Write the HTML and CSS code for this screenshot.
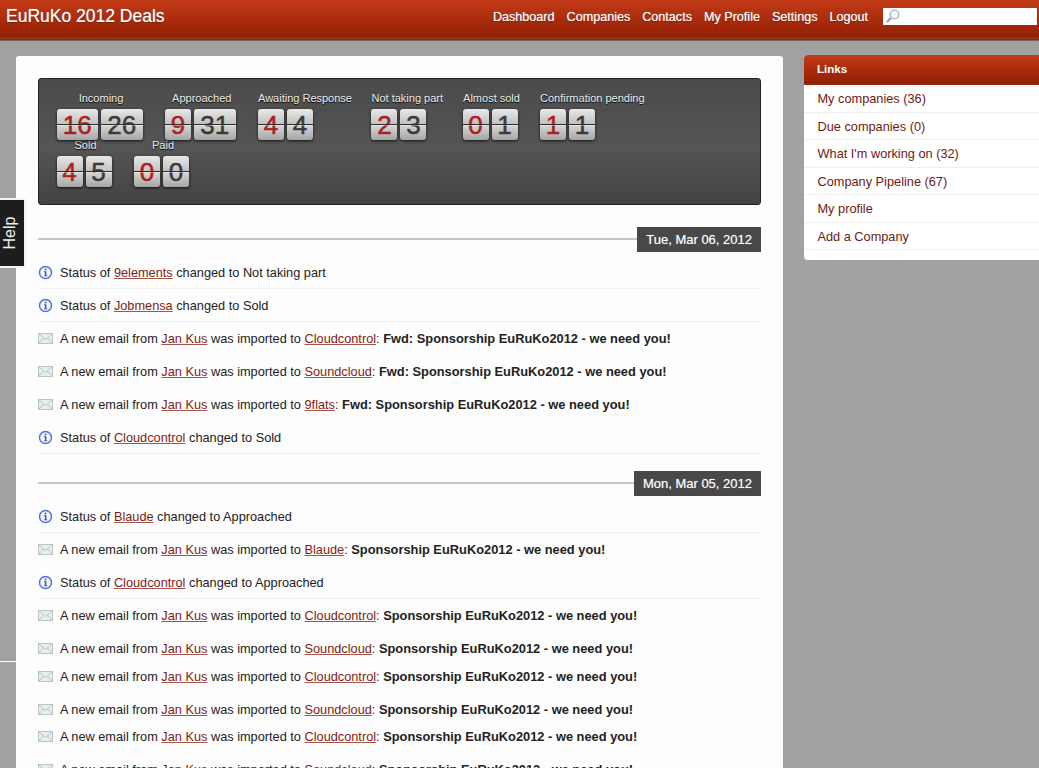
FILE: index.html
```html
<!DOCTYPE html>
<html lang="en">
<head>
	<meta charset="UTF-8">
	<title>EuRuKo 2012 Deals</title>
	<link rel="stylesheet" href="styles.css">
</head>
<body>

<svg class="defs" width="0" height="0">
	<symbol id="info" viewBox="0 0 15 15">
		<circle cx="7.500" cy="7.500" r="6" fill="#f6f8ff" stroke="#4f70e6" stroke-width="1.500"/>
		<rect x="6.700" y="3.600" width="1.700" height="1.700" fill="#44558c"/>
		<path d="M5.900 6.300h2.500v4.100h1v.9H5.900v-.9h1V7.200h-1z" fill="#44558c"/>
	</symbol>
	<symbol id="mail" viewBox="0 0 15 11">
		<rect x=".5" y=".5" width="14" height="10" fill="#e6efec" stroke="#b7c6c2"/>
		<path d="M1 1l6.500 5.500L14 1M1 10l4.500-5M14 10L9.500 5" fill="none" stroke="#b7c6c2"/>
	</symbol>
</svg>

<div id="header">
	<h1 class="brand">EuRuKo 2012 Deals</h1>
	<div class="nav">
		<a href="#">Dashboard</a>
		<a href="#">Companies</a>
		<a href="#">Contacts</a>
		<a href="#">My Profile</a>
		<a href="#">Settings</a>
		<a href="#">Logout</a>
	</div>
	<div class="search">
		<svg width="15" height="15" viewBox="0 0 15 15">
			<circle cx="9.500" cy="5.500" r="4.400" fill="#f2f5f8" stroke="#a9b4bc" stroke-width="1.400"/>
			<path d="M6 9L2 13" stroke="#9a9a9a" stroke-width="2"/>
		</svg>
	</div>
</div>

<a class="help" href="#"><span>Help</span></a>
<div class="seam"></div>

<div id="page">
	<div id="main">

		<div class="counters">
			<div class="counter-row">
				<div class="counter">
					<div class="counter-label">Incoming</div>
					<div class="cards"><span class="card red wide">16</span><span class="card wide">26</span></div>
				</div>
				<div class="counter">
					<div class="counter-label">Approached</div>
					<div class="cards"><span class="card red">9</span><span class="card wide">31</span></div>
				</div>
				<div class="counter">
					<div class="counter-label">Awaiting Response</div>
					<div class="cards"><span class="card red">4</span><span class="card">4</span></div>
				</div>
				<div class="counter">
					<div class="counter-label">Not taking part</div>
					<div class="cards"><span class="card red">2</span><span class="card">3</span></div>
				</div>
				<div class="counter">
					<div class="counter-label">Almost sold</div>
					<div class="cards"><span class="card red">0</span><span class="card">1</span></div>
				</div>
				<div class="counter">
					<div class="counter-label">Confirmation pending</div>
					<div class="cards"><span class="card red">1</span><span class="card">1</span></div>
				</div>
			</div>
			<div class="counter-row">
				<div class="counter">
					<div class="counter-label">Sold</div>
					<div class="cards"><span class="card red">4</span><span class="card">5</span></div>
				</div>
				<div class="counter">
					<div class="counter-label">Paid</div>
					<div class="cards"><span class="card red">0</span><span class="card">0</span></div>
				</div>
			</div>
		</div>

		<div class="day"><span class="day-date">Tue, Mar 06, 2012</span></div>
		<div class="row status"><svg class="ico-info"><use href="#info"/></svg><span>Status of <a href="#">9elements</a> changed to Not taking part</span></div>
		<div class="row status"><svg class="ico-info"><use href="#info"/></svg><span>Status of <a href="#">Jobmensa</a> changed to Sold</span></div>
		<div class="row"><svg class="ico-mail"><use href="#mail"/></svg><span>A new email from <a href="#">Jan Kus</a> was imported to <a href="#">Cloudcontrol</a>: <b>Fwd: Sponsorship EuRuKo2012 - we need you!</b></span></div>
		<div class="row"><svg class="ico-mail"><use href="#mail"/></svg><span>A new email from <a href="#">Jan Kus</a> was imported to <a href="#">Soundcloud</a>: <b>Fwd: Sponsorship EuRuKo2012 - we need you!</b></span></div>
		<div class="row"><svg class="ico-mail"><use href="#mail"/></svg><span>A new email from <a href="#">Jan Kus</a> was imported to <a href="#">9flats</a>: <b>Fwd: Sponsorship EuRuKo2012 - we need you!</b></span></div>
		<div class="row status"><svg class="ico-info"><use href="#info"/></svg><span>Status of <a href="#">Cloudcontrol</a> changed to Sold</span></div>

		<div class="day"><span class="day-date">Mon, Mar 05, 2012</span></div>
		<div class="row status"><svg class="ico-info"><use href="#info"/></svg><span>Status of <a href="#">Blaude</a> changed to Approached</span></div>
		<div class="row"><svg class="ico-mail"><use href="#mail"/></svg><span>A new email from <a href="#">Jan Kus</a> was imported to <a href="#">Blaude</a>: <b>Sponsorship EuRuKo2012 - we need you!</b></span></div>
		<div class="row status"><svg class="ico-info"><use href="#info"/></svg><span>Status of <a href="#">Cloudcontrol</a> changed to Approached</span></div>
		<div class="row"><svg class="ico-mail"><use href="#mail"/></svg><span>A new email from <a href="#">Jan Kus</a> was imported to <a href="#">Cloudcontrol</a>: <b>Sponsorship EuRuKo2012 - we need you!</b></span></div>
		<div class="row"><svg class="ico-mail"><use href="#mail"/></svg><span>A new email from <a href="#">Jan Kus</a> was imported to <a href="#">Soundcloud</a>: <b>Sponsorship EuRuKo2012 - we need you!</b></span></div>
		<div class="row cut"><svg class="ico-mail"><use href="#mail"/></svg><span>A new email from <a href="#">Jan Kus</a> was imported to <a href="#">Cloudcontrol</a>: <b>Sponsorship EuRuKo2012 - we need you!</b></span></div>
		<div class="row"><svg class="ico-mail"><use href="#mail"/></svg><span>A new email from <a href="#">Jan Kus</a> was imported to <a href="#">Soundcloud</a>: <b>Sponsorship EuRuKo2012 - we need you!</b></span></div>
		<div class="row cut-more"><svg class="ico-mail"><use href="#mail"/></svg><span>A new email from <a href="#">Jan Kus</a> was imported to <a href="#">Cloudcontrol</a>: <b>Sponsorship EuRuKo2012 - we need you!</b></span></div>
		<div class="row"><svg class="ico-mail"><use href="#mail"/></svg><span>A new email from <a href="#">Jan Kus</a> was imported to <a href="#">Soundcloud</a>: <b>Sponsorship EuRuKo2012 - we need you!</b></span></div>

	</div>

	<div id="sidebar">
		<h2 class="side-title">Links</h2>
		<a class="side-link" href="#">My companies (36)</a>
		<a class="side-link" href="#">Due companies (0)</a>
		<a class="side-link" href="#">What I'm working on (32)</a>
		<a class="side-link" href="#">Company Pipeline (67)</a>
		<a class="side-link" href="#">My profile</a>
		<a class="side-link" href="#">Add a Company</a>
	</div>
</div>

</body>
</html>
```

FILE: styles.css
```css
* {
	box-sizing: border-box;
}
html,
body {
	height: 768px;
	overflow: hidden;
}
body {
	margin: 0;
	color: #222;
	font-family: "Liberation Sans", Arial, sans-serif;
	font-size: 12.750px;
	background: conic-gradient(#9c9c9c 25%, #a6a6a6 0 50%, #9c9c9c 0 75%, #a6a6a6 0) 0 0 / 2px 2px;
}
a {
	color: #801c12;
	text-decoration-color: #a5544c;
}
.defs {
	position: absolute;
}

/* header */
#header {
	display: flex;
	align-items: center;
	height: 41px;
	padding: 0 2px 8px 6px;
	background: linear-gradient(#c23a17, #962005 36px, #7f1c05 36px, #a8300f 38px, #8f2408 40px);
	border-bottom: 1px solid #6d6d6d;
}
.brand {
	margin: 0;
	color: #fff;
	font-size: 17.500px;
	font-weight: normal;
	text-shadow: 0 0 1px rgba(255, 255, 255, .6), 0 1px 1px rgba(0, 0, 0, .4);
}
.nav {
	display: flex;
	gap: 12px;
	margin-left: auto;
	padding-top: 2px;
}
.nav a {
	color: #fff;
	font-size: 12.600px;
	text-decoration: none;
	text-shadow: 0 0 1px rgba(255, 255, 255, .6), 0 1px 1px rgba(0, 0, 0, .4);
}
.search {
	display: flex;
	align-items: center;
	width: 154px;
	height: 17px;
	margin-left: 15px;
	padding-left: 2px;
	background: #fff;
}

/* help tab */
.help {
	position: absolute;
	left: 0;
	top: 198px;
	display: flex;
	align-items: center;
	justify-content: center;
	width: 26px;
	height: 70px;
	padding-right: 3px;
	background: #1d1d1d;
	border: 2px solid #f4f4f4;
	border-left: 0;
	color: #eee;
	font-size: 16px;
	text-decoration: none;
}
.help span {
	transform: rotate(-90deg);
}
.seam {
	position: absolute;
	left: 0;
	top: 661px;
	width: 16px;
	height: 1px;
	background: #fff;
}

/* layout */
#page {
	display: flex;
	align-items: flex-start;
	padding: 15px 0 0 16px;
}
#main {
	flex: none;
	width: 767px;
	height: 760px;
	padding: 22px;
	background: #fdfdfd;
	border-radius: 3px;
}
#sidebar {
	flex: none;
	width: 240px;
	margin: -1px 0 0 21px;
	padding-bottom: 10px;
	background: #fff;
	border-radius: 4px;
}

/* counters */
.counters {
	height: 127px;
	margin-bottom: 22px;
	padding: 12px 0 0 17.500px;
	background: linear-gradient(#4b4b4b, #555 55%, #434343);
	border: 1px solid #222;
	border-radius: 3px;
}
.counter-row {
	display: flex;
	gap: 19.500px;
	height: 47px;
}
.counter-label {
	color: #eee;
	font-size: 11px;
	line-height: 14px;
	text-align: center;
	text-shadow: 0 1px 1px #000;
}
.cards {
	display: flex;
	margin-top: 4px;
}
.card {
	position: relative;
	width: 26px;
	height: 31px;
	margin-right: 3px;
	color: #3a3a3a;
	font-size: 26px;
	line-height: 32px;
	text-align: center;
	-webkit-text-stroke: .5px currentColor;
	background: linear-gradient(#e8e8e8, #c2c2c2 48%, #d6d6d6 52%, #a6a6a6);
	border-radius: 3px;
	box-shadow: 0 1px 3px rgba(0, 0, 0, .8);
}
.card::after {
	content: "";
	position: absolute;
	left: 0;
	right: 0;
	top: 15px;
	height: 2px;
	background: linear-gradient(#2e2e2e 50%, rgba(255, 255, 255, .35) 50%);
}
.card.wide {
	width: 41.500px;
}
.card.red {
	color: #ad2020;
}

/* activity */
.day {
	position: relative;
	display: flex;
	justify-content: flex-end;
	height: 25px;
	margin: 17px 0 4px;
}
.day::before {
	content: "";
	position: absolute;
	left: 0;
	right: 0;
	top: 11px;
	height: 2px;
	background: #c6c6c6;
}
.day-date {
	position: relative;
	padding: 0 9px;
	color: #fff;
	font-size: 13px;
	line-height: 25px;
	background: #484848;
	text-shadow: 0 0 1px rgba(255, 255, 255, .5);
}
.row {
	display: flex;
	align-items: center;
	height: 33px;
}
.row.status {
	border-bottom: 1px solid #efefef;
}
.row.cut {
	margin-top: -5px;
}
.row.cut-more {
	margin-top: -6px;
}
.row b {
	font-size: 12.850px;
}
.ico-info {
	flex: none;
	width: 15px;
	height: 15px;
	margin-right: 7px;
}
.ico-mail {
	flex: none;
	width: 15px;
	height: 11px;
	margin-right: 7px;
}
.row span {
	white-space: nowrap;
}

/* sidebar */
.side-title {
	margin: 0;
	height: 30px;
	padding-left: 13px;
	color: #fff;
	font-size: 11.500px;
	line-height: 29px;
	background: linear-gradient(#c23a17, #962005 27px, #7f1c05 27px, #a8300f 30px);
	border-radius: 4px 4px 0 0;
}
.side-link {
	display: block;
	height: 27.500px;
	padding-left: 13.500px;
	font-size: 12.750px;
	line-height: 27px;
	color: #6d1a12;
	text-decoration: none;
	border-bottom: 1px solid #f0f0f0;
}
```
